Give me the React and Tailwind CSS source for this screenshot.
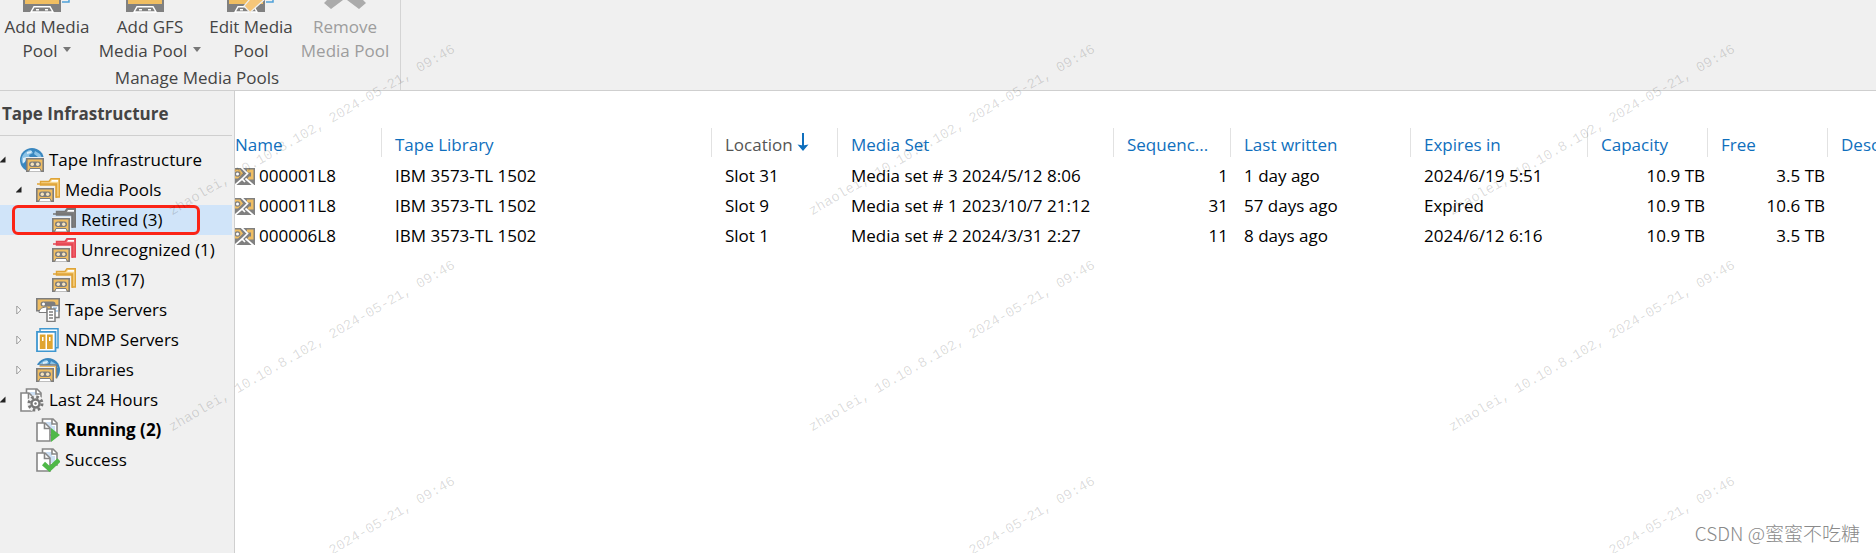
import clsx from 'clsx';

const FOLDER_COLORS = {
  gold: { line: '#dfa437', fill: '#f8d68c' },
  gray: { line: '#757575', fill: '#808080' },
  red: { line: '#e54552', fill: '#f0646e' },
};

const TREE = [
  { label: 'Tape Infrastructure', level: 0, icon: 'infrastructure', state: 'open' },
  { label: 'Media Pools', level: 1, icon: 'pool', state: 'open' },
  { label: 'Retired (3)', level: 2, icon: 'retired', selected: true },
  { label: 'Unrecognized (1)', level: 2, icon: 'unrecognized' },
  { label: 'ml3 (17)', level: 2, icon: 'pool' },
  { label: 'Tape Servers', level: 1, icon: 'servers', state: 'closed' },
  { label: 'NDMP Servers', level: 1, icon: 'ndmp', state: 'closed' },
  { label: 'Libraries', level: 1, icon: 'libraries', state: 'closed' },
  { label: 'Last 24 Hours', level: 0, icon: 'history', state: 'open' },
  { label: 'Running (2)', level: 1, icon: 'running', bold: true },
  { label: 'Success', level: 1, icon: 'success' },
];

const INDENTS = ['pl-0', 'pl-4', 'pl-8'];

const COLUMNS = [
  { label: 'Name', width: 'w-[146px]' },
  { label: 'Tape Library', width: 'w-[330px]' },
  { label: 'Location', width: 'w-[126px]', sorted: true },
  { label: 'Media Set', width: 'w-[276px]' },
  { label: 'Sequenc...', width: 'w-[117px]' },
  { label: 'Last written', width: 'w-[180px]' },
  { label: 'Expires in', width: 'w-[177px]' },
  { label: 'Capacity', width: 'w-[120px]' },
  { label: 'Free', width: 'w-[120px]' },
  { label: 'Description', width: '' },
];

const TAPES = [
  {
    name: '000001L8',
    library: 'IBM 3573-TL 1502',
    location: 'Slot 31',
    mediaSet: 'Media set # 3 2024/5/12 8:06',
    sequence: 1,
    written: '1 day ago',
    expires: '2024/6/19 5:51',
    capacity: '10.9 TB',
    free: '3.5 TB',
  },
  {
    name: '000011L8',
    library: 'IBM 3573-TL 1502',
    location: 'Slot 9',
    mediaSet: 'Media set # 1 2023/10/7 21:12',
    sequence: 31,
    written: '57 days ago',
    expires: 'Expired',
    capacity: '10.9 TB',
    free: '10.6 TB',
  },
  {
    name: '000006L8',
    library: 'IBM 3573-TL 1502',
    location: 'Slot 1',
    mediaSet: 'Media set # 2 2024/3/31 2:27',
    sequence: 11,
    written: '8 days ago',
    expires: '2024/6/12 6:16',
    capacity: '10.9 TB',
    free: '3.5 TB',
  },
];

function Cassette() {
  return (
    <g>
      <path d="M0 9h19v15H0z" fill="#f0f0f0" />
      <path d="M.8 10.800h16.400v12.400H.8z" fill="#f0be62" stroke="#7d7d7d" strokeWidth="1.600" />
      <rect x="3" y="13.500" width="12" height="5.500" rx="2.700" fill="#7d7d7d" />
      <circle cx="6.300" cy="16.200" r="1.700" fill="#f6e3bd" />
      <circle cx="11.700" cy="16.200" r="1.700" fill="#f6e3bd" />
      <path d="M2.500 24l1.500-3.500h10l1.500 3.500z" fill="#fff" stroke="#7d7d7d" />
    </g>
  );
}

function Folder({ color }) {
  const { line, fill } = FOLDER_COLORS[color];
  return (
    <g>
      <path d="M4.500 3.500h8.500l2-2.800h8.300v18.300H20V7H4.500z" fill={fill} stroke={line} strokeWidth="1.400" />
      <path d="M16 2h6v1.800h-7z" fill="#fff" />
      <path d="M1 6h19.500v14" fill="none" stroke={line} strokeWidth="1.500" />
    </g>
  );
}

function Papers() {
  return (
    <g strokeWidth="1.600">
      <path d="M6.500 5V1h10.500l4 4v12h-7" fill="#fff" stroke="#868686" />
      <path d="M10 4h6v4h3v7h-5l-4-6z" fill="#cde0f5" />
      <path d="M16 1v5h5" fill="none" stroke="#868686" />
      <path d="M1 5h8l5 5v13H1z" fill="#fff" stroke="#868686" />
      <path d="M8.500 5v5.500h5.500" fill="none" stroke="#868686" />
    </g>
  );
}

function Globe() {
  return (
    <g>
      <circle cx="12" cy="12" r="12" fill="#3a87bf" />
      <path d="M3 7c2-3 5-5 8-5l2 3-4 2 1 3-4 2-3 4C1 13 1 10 3 7zM15 3l5 3 2 4-4-1-4-3z" fill="#8cc3e6" />
      <path d="M7 4l5-1-1 2-4 1zM3 10l3-1-1 5-2 1z" fill="#dceefa" />
    </g>
  );
}

function TreeIcon({ name }) {
  return (
    <svg viewBox="0 0 24 24" className="size-6 shrink-0" aria-hidden="true">
      {name === 'infrastructure' && (
        <>
          <Globe />
          <g transform="translate(6 0)">
            <Cassette />
          </g>
        </>
      )}
      {name === 'pool' && (
        <>
          <Folder color="gold" />
          <Cassette />
        </>
      )}
      {name === 'retired' && (
        <>
          <Folder color="gray" />
          <Cassette />
        </>
      )}
      {name === 'unrecognized' && (
        <>
          <Folder color="red" />
          <Cassette />
        </>
      )}
      {name === 'servers' && (
        <>
          <path d="M.8.8h22.400v12H.8z" fill="#f0be62" stroke="#7d7d7d" strokeWidth="1.600" />
          <rect x="4.500" y="3.500" width="15" height="5" rx="2.500" fill="#7d7d7d" />
          <circle cx="7.500" cy="6" r="1.500" fill="#fff" />
          <path d="M3 14.500c0-4 4-5.500 8-5.500v5.500z" fill="#fff" stroke="#7d7d7d" />
          <path d="M15 7.500h8v12h-8z" fill="#fff" stroke="#7d7d7d" strokeWidth="1.500" />
          <path d="M17 10h4M19 13h3" stroke="#9cc2e6" strokeWidth="1.500" />
          <path d="M11 11h8v12.500h-8z" fill="#fff" stroke="#7d7d7d" strokeWidth="1.500" />
          <path d="M13 14h4M13 17h4M13 20h4" stroke="#7d7d7d" strokeWidth="1.300" />
        </>
      )}
      {name === 'ndmp' && (
        <>
          <path d="M4 .8h18v19H4z" fill="#fff" stroke="#3f97d0" strokeWidth="1.500" />
          <path d="M1 3.800h18.500v19.500H1z" fill="#fff" stroke="#3f97d0" strokeWidth="1.800" />
          <path d="M3.800 6.500h5.700v14.500H3.800zM11 6.500h5.700v14.500H11z" fill="#e0a530" />
          <path d="M6 9h1.500v4H6zM13 9h1.500v4H13z" fill="#fff" />
        </>
      )}
      {name === 'libraries' && (
        <>
          <Globe />
          <path d="M0 7h21v17H0z" fill="#f0f0f0" />
          <path d="M3.500 7h17v13.500" fill="none" stroke="#7d7d7d" strokeWidth="1.500" />
          <path d="M3.500 8.800h15.500V20" fill="none" stroke="#f0be62" strokeWidth="1.800" />
          <Cassette />
        </>
      )}
      {name === 'history' && (
        <>
          <Papers />
          <circle cx="15.500" cy="15.500" r="8.500" fill="#f0f0f0" />
          <circle cx="15.500" cy="15.500" r="6.500" fill="none" stroke="#777" strokeWidth="3" strokeDasharray="2.550 2.550" />
          <circle cx="15.500" cy="15.500" r="4" fill="#fff" stroke="#777" strokeWidth="2.400" />
          <circle cx="15.500" cy="15.500" r="1.200" fill="#777" />
        </>
      )}
      {name === 'running' && (
        <>
          <Papers />
          <path d="M15 10l9 7-9 7z" fill="#4fb848" />
        </>
      )}
      {name === 'success' && (
        <>
          <Papers />
          <path d="M7.500 15.500l6 5.500L23 12" fill="none" stroke="#4fb848" strokeWidth="4.500" />
        </>
      )}
    </svg>
  );
}

function Twisty({ state }) {
  return (
    <svg viewBox="0 0 6 10" className="h-2.5 w-1.5 shrink-0" aria-hidden="true">
      {state === 'open' && <path d="M5.500 1.500v6h-6z" fill="#222" />}
      {state === 'closed' && <path d="M.8 1l4 4-4 4z" fill="#fff" stroke="#9a9a9a" />}
    </svg>
  );
}

function TapeIcon() {
  return (
    <svg viewBox="0 0 20 17" className="h-[17px] w-5 shrink-0" aria-hidden="true">
      <path d="M0 0h20v17H0z" fill="#808080" />
      <path d="M0 1.500h5l3 4-5 5H0zM12 1.500h6.500v10H12l2-3h2v-4h-4z" fill="#f0be62" />
      <circle cx="2.500" cy="6" r="2.800" fill="#808080" />
      <circle cx="2.500" cy="6" r="1.500" fill="#fff" />
      <path d="M6-1l6.500 6.500L7 11M0 17l7-6 3 3M10.500 10.500l8 7" fill="none" stroke="#fff" strokeWidth="1.700" />
    </svg>
  );
}

// Only the lower edge of the ribbon icons is in view
function RibbonIcon({ kind }) {
  if (kind === 'remove') {
    return (
      <svg viewBox="0 0 48 13" className="h-[13px] w-12" aria-hidden="true">
        <path d="M3 3l7 6 12-9H6zM45 3l-7 6-12-9h16z" fill="#ababab" />
      </svg>
    );
  }

  return (
    <svg viewBox="0 0 48 13" className="h-[13px] w-12" aria-hidden="true">
      <path d="M0 0h38v12H0z" fill="#808080" />
      <path d="M2 0h34v4H2z" fill="#f0be62" />
      <path d="M8 12l3-5.300h16l3 5.300z" fill="#808080" stroke="#fff" strokeWidth="1.500" />
      <path d="M13 9h3v1.500h-3zM22 9h3v1.500h-3z" fill="#fff" />
      {(kind === 'add' || kind === 'edit') && (
        <path d="M39 2h7V0" fill="none" stroke="#4ea0d8" strokeWidth="1.500" />
      )}
      {kind === 'edit' && (
        <path d="M23-1l-6 7 6 6.500L38-1z" fill="#f5c67a" stroke="#f0f0f0" strokeWidth="1.200" />
      )}
    </svg>
  );
}

function RibbonButton({ width, kind, lines, menu, disabled }) {
  return (
    <button
      disabled={disabled}
      className={clsx(
        'flex flex-col items-center leading-6',
        width,
        disabled ? 'text-[#9d9d9d]' : 'text-[#444]'
      )}
    >
      <RibbonIcon kind={kind} />
      <span className="mt-0.5 whitespace-nowrap">{lines[0]}</span>
      <span className="flex items-center gap-1.5 whitespace-nowrap">
        {lines[1]}
        {menu && (
          <svg viewBox="0 0 8 5" className="mb-1 h-[5px] w-2" aria-hidden="true">
            <path d="M0 0h8L4 5z" fill="#777" />
          </svg>
        )}
      </span>
    </button>
  );
}

function Ribbon() {
  return (
    <header className="flex border-b border-[#cfcfcf] bg-[#f0f0f0]">
      <div className="border-r border-[#d4d4d4] pr-1.5">
        <div className="flex">
          <RibbonButton width="w-[94px]" kind="add" lines={['Add Media', 'Pool']} menu />
          <RibbonButton width="w-[112px]" kind="gfs" lines={['Add GFS', 'Media Pool']} menu />
          <RibbonButton width="w-[90px]" kind="edit" lines={['Edit Media', 'Pool']} />
          <RibbonButton width="w-[98px]" kind="remove" lines={['Remove', 'Media Pool']} disabled />
        </div>
        <p className="pt-[3px] text-center leading-6 text-[#444]">Manage Media Pools</p>
      </div>
    </header>
  );
}

function Sidebar() {
  return (
    <aside className="w-[235px] shrink-0 border-r border-[#cfcfcf] bg-[#f0f0f0]">
      <h2 className="mr-0.5 border-b border-[#cfcfcf] pt-[11px] pb-[9px] pl-0.5 leading-6 font-bold text-[#444]">
        Tape Infrastructure
      </h2>
      <ul className="mt-[9px] mr-0.5">
        {TREE.map((node) => (
          <li key={node.label} className={clsx('relative', node.selected && 'bg-[#d0e4f9]')}>
            <button
              className={clsx(
                'flex h-[30px] w-full items-center whitespace-nowrap',
                INDENTS[node.level],
                node.bold && 'font-bold'
              )}
            >
              <Twisty state={node.state} />
              <span className="ml-3.5">
                <TreeIcon name={node.icon} />
              </span>
              <span className="ml-[5px]">{node.label}</span>
            </button>
            {node.selected && (
              <span className="pointer-events-none absolute top-0 left-3 h-[30px] w-[188px] rounded-md border-3 border-[#fb2416]" />
            )}
          </li>
        ))}
      </ul>
    </aside>
  );
}

function TapeTable() {
  return (
    <table className="w-full table-fixed text-left whitespace-nowrap">
      <thead>
        <tr>
          {COLUMNS.map((col, i) => (
            <th
              key={col.label}
              className={clsx(
                'overflow-hidden p-0 font-normal',
                col.width,
                col.sorted ? 'text-[#555]' : 'text-[#0f6fbd]'
              )}
            >
              <button
                className={clsx(
                  'mb-1 flex h-[29px] w-full items-center gap-1 pt-1.5 pb-px',
                  i > 0 && 'border-l border-[#e2e2e2] pl-[13px]'
                )}
              >
                {col.label}
                {col.sorted && (
                  <svg viewBox="0 0 12 18" className="mb-1.5 h-[18px] w-3" aria-hidden="true">
                    <path d="M6 0v14" stroke="#0f6fbd" strokeWidth="2" />
                    <path d="M.5 11.500l5.500 1 5.500-1L6 18z" fill="#0f6fbd" />
                  </svg>
                )}
              </button>
            </th>
          ))}
        </tr>
      </thead>
      <tbody>
        {TAPES.map((tape) => (
          <tr key={tape.name} className="h-[30px]">
            <td className="p-0">
              <div className="flex items-center gap-1">
                <TapeIcon />
                {tape.name}
              </div>
            </td>
            <td className="py-0 pl-3.5">{tape.library}</td>
            <td className="py-0 pl-3.5">{tape.location}</td>
            <td className="py-0 pl-3.5">{tape.mediaSet}</td>
            <td className="py-0 pr-0.5 text-right">{tape.sequence}</td>
            <td className="py-0 pl-3.5">{tape.written}</td>
            <td className="py-0 pl-3.5">{tape.expires}</td>
            <td className="py-0 pr-0.5 text-right">{tape.capacity}</td>
            <td className="py-0 pr-0.5 text-right">{tape.free}</td>
            <td />
          </tr>
        ))}
      </tbody>
    </table>
  );
}

function Watermark() {
  return (
    <div className="pointer-events-none absolute inset-0 overflow-hidden" aria-hidden="true">
      <div className="-ml-2 grid grid-cols-[repeat(3,640px)] auto-rows-[216px] pt-[22px]">
        {Array.from({ length: 9 }, (_, i) => (
          <div key={i} className="flex items-center justify-center">
            <span className="-rotate-30 font-['Liberation_Mono',monospace] text-sm whitespace-nowrap text-black/15">
              zhaolei, 10.10.8.102, 2024-05-21, 09:46
            </span>
          </div>
        ))}
      </div>
    </div>
  );
}

export default function App() {
  return (
    <div className="relative flex min-h-screen flex-col overflow-hidden bg-white font-['Open_Sans','Noto_Sans_CJK_SC',sans-serif] text-[17px] text-black">
      <Ribbon />
      <div className="flex grow">
        <Sidebar />
        <main className="min-w-0 grow pt-[37px]">
          <TapeTable />
        </main>
      </div>
      <Watermark />
      <p className="absolute right-4 bottom-1.5 font-['Noto_Sans_CJK_SC',sans-serif] text-[19px] leading-7 font-light text-[#8a8a8a]">
        CSDN @蜜蜜不吃糖
      </p>
    </div>
  );
}
